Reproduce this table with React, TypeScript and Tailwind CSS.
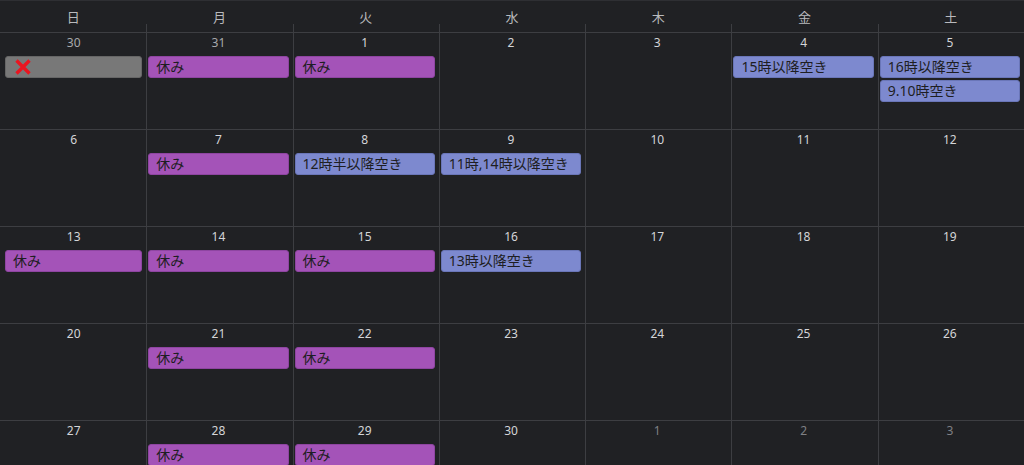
type Ev = { kind: "off" | "free" | "x"; text?: string };
type Day = { n: number; dim?: "prev" | "next"; events?: Ev[] };

const off: Ev = { kind: "off", text: "休み" };
const free = (text: string): Ev => ({ kind: "free", text });

const weeks: Day[][] = [
  [
    { n: 30, dim: "prev", events: [{ kind: "x" }] },
    { n: 31, dim: "prev", events: [off] },
    { n: 1, events: [off] },
    { n: 2 },
    { n: 3 },
    { n: 4, events: [free("15時以降空き")] },
    { n: 5, events: [free("16時以降空き"), free("9.10時空き")] },
  ],
  [
    { n: 6 },
    { n: 7, events: [off] },
    { n: 8, events: [free("12時半以降空き")] },
    { n: 9, events: [free("11時,14時以降空き")] },
    { n: 10 },
    { n: 11 },
    { n: 12 },
  ],
  [
    { n: 13, events: [off] },
    { n: 14, events: [off] },
    { n: 15, events: [off] },
    { n: 16, events: [free("13時以降空き")] },
    { n: 17 },
    { n: 18 },
    { n: 19 },
  ],
  [
    { n: 20 },
    { n: 21, events: [off] },
    { n: 22, events: [off] },
    { n: 23 },
    { n: 24 },
    { n: 25 },
    { n: 26 },
  ],
  [
    { n: 27 },
    { n: 28, events: [off] },
    { n: 29, events: [off] },
    { n: 30 },
    { n: 1, dim: "next" },
    { n: 2, dim: "next" },
    { n: 3, dim: "next" },
  ],
];

const dows = ["日", "月", "火", "水", "木", "金", "土"];

function RedX() {
  return (
    <svg width="18" height="18" viewBox="0 0 18 18">
      <path d="M2.5 2.5 L15.5 15.5 M15.5 2.5 L2.5 15.5" stroke="#ea1520" strokeWidth="3.4" />
    </svg>
  );
}

function EventChip({ ev }: { ev: Ev }) {
  if (ev.kind === "x") {
    return (
      <div className="h-[22px] rounded-[3px] bg-[#787878] border border-[#666] flex items-center pl-[8px]">
        <RedX />
      </div>
    );
  }
  const color =
    ev.kind === "off"
      ? "bg-[#a453b8] border-[#8e45a1]"
      : "bg-[#7d89cf] border-[#6a76b8]";
  return (
    <div
      className={`h-[22px] rounded-[3px] border ${color} flex items-center pl-[7px] text-[14px] leading-none text-[#1e1e22] whitespace-nowrap overflow-hidden`}
    >
      {ev.text}
    </div>
  );
}

export default function App() {
  return (
    <div
      className="w-[1024px] h-[465px] overflow-hidden bg-[#202124] border-t border-[#2e2f33]"
      style={{ fontFamily: '"Noto Sans", "Noto Sans CJK JP", sans-serif' }}
    >
      <div className="grid grid-cols-7 border-b border-[#3d3e42]">
        {dows.map((d, i) => (
          <div key={d} className="flex flex-col">
            <div className="h-[23px] pt-[7px] text-center text-[13px] leading-[18px] text-[#b9babd]">{d}</div>
            <div className={`h-[8px] ${i > 0 ? "border-l border-[#3d3e42]" : ""}`} />
          </div>
        ))}
      </div>
      {weeks.map((week, wi) => (
        <div key={wi} className="grid grid-cols-7 h-[97px] border-b border-[#3d3e42]">
          {week.map((day, di) => (
            <div
              key={di}
              className={`flex flex-col ${di > 0 ? "border-l border-[#3d3e42] pl-[1px] pr-[4px]" : "pl-[5px] pr-[4px]"}`}
            >
              <div
                className={`pt-[2px] h-[23px] text-center text-[12px] leading-[16px] ${
                  day.dim === "next" ? "text-[#7f8084]" : day.dim === "prev" ? "text-[#a8a9ac]" : "text-[#d4d5d8]"
                }`}
              >
                {day.n}
              </div>
              <div className="flex flex-col gap-[2px]">
                {(day.events ?? []).map((ev, ei) => (
                  <EventChip key={ei} ev={ev} />
                ))}
              </div>
            </div>
          ))}
        </div>
      ))}
    </div>
  );
}
